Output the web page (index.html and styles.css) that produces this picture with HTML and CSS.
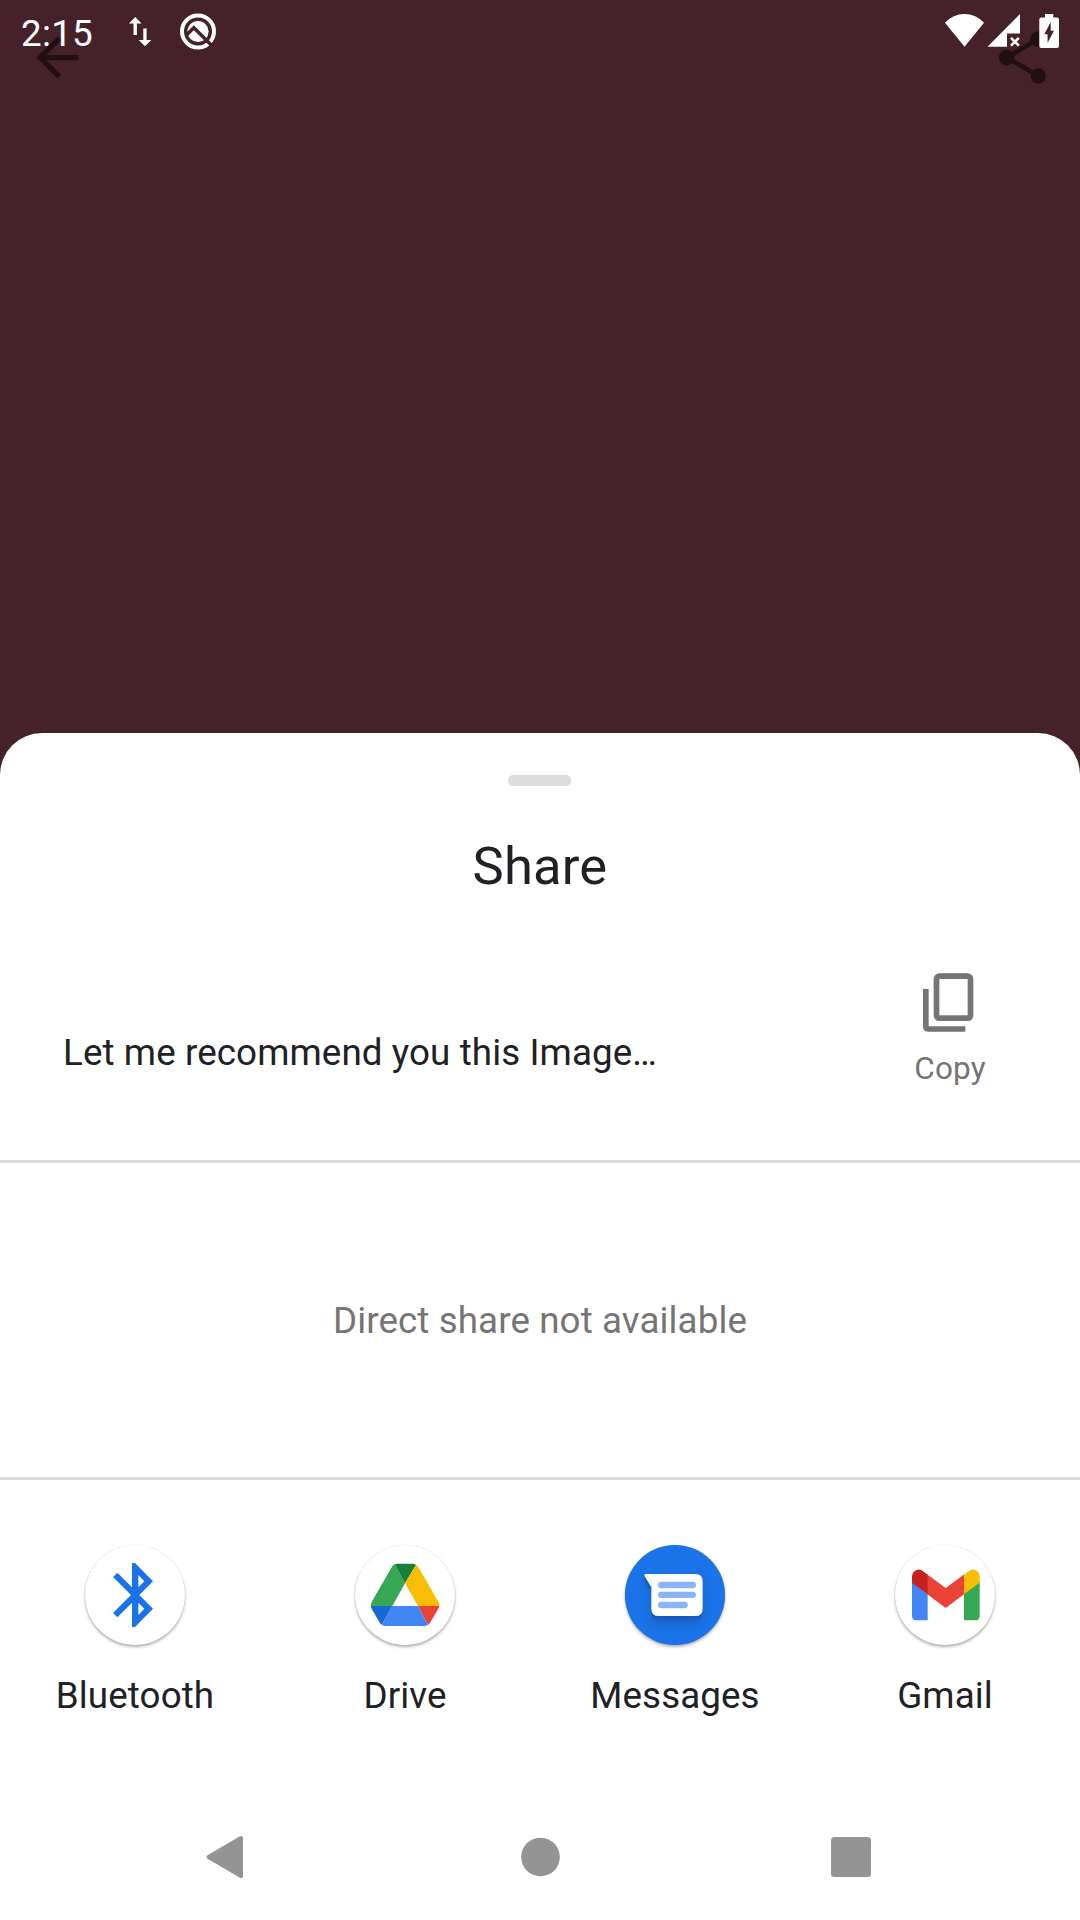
FILE: index.html
```html
<!DOCTYPE html>
<html lang="en">
<head>
<meta charset="utf-8">
<title>Share</title>
<link rel="stylesheet" href="styles.css">
</head>
<body>
<div class="screen">
  <header class="app-bar">
    <svg class="app-icon" viewBox="0 0 24 24"><path d="M20 11H7.830l5.590-5.590L12 4l-8 8 8 8 1.410-1.410L7.830 13H20z"/></svg>
    <svg class="app-icon" viewBox="0 0 24 24"><path d="M18 16.080c-.76 0-1.440.3-1.960.77L8.910 12.700c.05-.23.09-.46.09-.7s-.04-.47-.09-.7l7.050-4.110c.54.5 1.250.81 2.040.81 1.660 0 3-1.340 3-3s-1.340-3-3-3-3 1.340-3 3c0 .24.04.47.09.7L8.040 9.810C7.500 9.310 6.790 9 6 9c-1.660 0-3 1.340-3 3s1.340 3 3 3c.79 0 1.500-.31 2.040-.81l7.120 4.160c-.05.21-.08.43-.08.65 0 1.610 1.310 2.920 2.920 2.920s2.920-1.310 2.920-2.920-1.310-2.920-2.920-2.920z"/></svg>
  </header>

  <div class="status-bar">
    <span class="clock">2:15</span>
    <svg class="status-left" viewBox="126 0 96 64">
      <path d="M135.200 17l6.300 6.500h-4.600V35h-3.400V23.500h-4.600zM145 46.200l-6.300-6.200h4.600V28.500h3.300V40h4.700z"/>
      <circle class="ring" cx="198" cy="31.500" r="16"/>
      <circle cx="198" cy="31.500" r="10.600"/>
      <path class="slash" d="M187 34.500L193.800 27.700L211.500 45.200"/>
    </svg>
    <svg class="status-right" viewBox="940 0 124 64">
      <path d="M945 22.800Q953 14 964.500 14T984 22.800L964.500 46.700zM987.500 46.800L1020 14V33.500H1007V46.800z"/>
      <path class="cross" d="M1011 37.800l7.800 7.800m0-7.800l-7.800 7.800"/>
      <path fill-rule="evenodd" d="M1045 14h8.300v3.500h3.700q2 0 2 2V46q0 2-2 2h-15.700q-2 0-2-2V19.500q0-2 2-2h3.700zM1050.700 22L1044.300 34.300h3.300v8.400L1054 30.700h-3.300z"/>
    </svg>
  </div>

  <main class="sheet">
    <div class="handle"></div>
    <h1 class="title">Share</h1>

    <section class="preview">
      <p class="preview-text">Let me recommend you this Image…</p>
      <div class="copy">
        <svg class="copy-icon" viewBox="129 69 162 177">
          <rect x="169.500" y="78.500" width="102" height="126" rx="8"/>
          <path d="M137.500 117V229q0 8 8 8H256"/>
        </svg>
        <span>Copy</span>
      </div>
    </section>

    <section class="direct">Direct share not available</section>

    <section class="apps">
      <div class="app">
        <svg class="badge" viewBox="135 45 300 300">
          <path fill="#1a73e8" fill-rule="evenodd" d="M276 99H285L339 154L298 195L339 236L285 291H276V218L232 262L219 249L273 195L219 141L232 128L276 172zM295 135V172L313 154zM295 218V255L313 236z"/>
        </svg>
        <span>Bluetooth</span>
      </div>
      <div class="app">
        <svg class="badge" viewBox="45 45 300 300">
          <path fill="#34a853" d="M93 228Q92 222 95 216L154 113Q158 106 164 103L195 160L157 228z"/>
          <path fill="#188038" d="M164 103Q168 101 173 101H218Q224 101 228 105L195 160z"/>
          <path fill="#fbbc04" d="M228 105Q233 107 236 113L295 215Q299 222 298 228H234L195 160z"/>
          <path fill="#ea4335" d="M234 228H298Q297 233 294 238L272 275Q269 281 264 284z"/>
          <path fill="#4285f4" d="M157 228H234L264 284Q259 288 253 288H138Q130 288 125 284z"/>
          <path fill="#1967d2" d="M93 228H157L125 284Q121 281 118 276L97 240Q93 234 93 228z"/>
        </svg>
        <span>Drive</span>
      </div>
      <div class="app">
        <svg class="badge badge-blue" viewBox="135 45 300 300">
          <defs>
            <filter id="soft" x="-30%" y="-30%" width="160%" height="180%"><feGaussianBlur stdDeviation="14"/></filter>
          </defs>
          <path fill="#174ea6" opacity=".5" filter="url(#soft)" d="M195 150H345Q368 150 368 171V250Q368 280 345 280H236Q214 280 214 260V187z"/>
          <path fill="#185abc" d="M193 140V150L214 185V247Q214 268 236 268H346Q368 268 368 247V153z"/>
          <path fill="#fff" d="M197 132H346Q368 132 368 154V236Q368 258 346 258H236Q214 258 214 236V172L194 139Q191 132 197 132z"/>
          <path fill="none" stroke="#8ab4f8" stroke-width="19" stroke-linecap="round" d="M243.500 165H338.500M243.500 194.500H338.500M243.500 225H314"/>
        </svg>
        <span>Messages</span>
      </div>
      <div class="app">
        <svg class="badge" viewBox="45 45 300 300">
          <path fill="#4285f4" d="M96 155L143 188V271H110Q96 271 96 257z"/>
          <path fill="#34a853" d="M252 188L299 155V257Q299 271 285 271H252z"/>
          <path fill="#ea4335" d="M141 133L197 174L253 133V192L197 234L141 192z"/>
          <path fill="#c5221f" d="M96 159V139Q97 123 112 119Q122 117 132 126L143 134V192z"/>
          <path fill="#fbbc04" d="M252 134L263 126Q273 117 284 119Q298 123 299 139V158L252 192z"/>
        </svg>
        <span>Gmail</span>
      </div>
    </section>

    <nav class="nav">
      <svg class="nav-icon" viewBox="0 0 44 44"><path d="M3.500 20.300Q1.600 22 3.500 23.700L35.500 42.500Q39 44 39 41V3Q39 0 35.500 1.500z"/></svg>
      <svg class="nav-icon" viewBox="0 0 44 44"><circle cx="23.500" cy="22" r="19.300"/></svg>
      <svg class="nav-icon" viewBox="0 0 44 44"><rect x="2" y="2" width="40" height="40" rx="3.500"/></svg>
    </nav>
  </main>
</div>
</body>
</html>
```
FILE: styles.css
```css
* {
  box-sizing: border-box;
}

body {
  margin: 0;
  background: #452229;
  color: #202124;
  font-family: Roboto, sans-serif;
  font-size: 36.75px;
  letter-spacing: .1px;
  line-height: 44px;
}

svg {
  display: block;
  flex: none;
}

.screen {
  position: relative;
  display: flex;
  flex-direction: column;
  width: 1080px;
  height: 1920px;
  overflow: hidden;
}

.app-bar {
  display: flex;
  justify-content: space-between;
  align-items: flex-start;
  height: 733px;
  padding: 26px;
}

.app-icon {
  width: 63px;
  height: 63px;
  fill: #220f13;
}

/* The system bar is drawn over the app's own bar. */
.status-bar {
  position: absolute;
  top: 0;
  left: 0;
  display: flex;
  width: 1080px;
  height: 64px;
  padding: 0 16px 0 21px;
  color: #fff;
  fill: #fff;
}

.clock {
  width: 105px;
  padding-top: 12px;
  letter-spacing: .3px;
}

.status-left {
  width: 96px;
  height: 64px;
}

.status-right {
  width: 124px;
  height: 64px;
  margin-left: auto;
}

.ring,
.slash {
  fill: none;
  stroke: #fff;
  stroke-width: 4;
}

.slash {
  stroke: #452229;
  stroke-width: 3.4;
}

.cross {
  fill: none;
  stroke: #fff;
  stroke-width: 2.6;
}

.sheet {
  display: flex;
  flex: 1;
  flex-direction: column;
  align-items: stretch;
  padding-top: 42px;
  border-radius: 42px 42px 0 0;
  background: #fff;
}

.handle {
  align-self: center;
  width: 63px;
  height: 11px;
  margin-right: 1px;
  border-radius: 5px;
  background: #dcdcdc;
}

.title {
  margin: 49px 0 0;
  font-size: 52.5px;
  font-weight: 400;
  letter-spacing: .2px;
  line-height: 62px;
  text-align: center;
}

.preview {
  display: flex;
  justify-content: space-between;
  height: 266px;
  padding: 76px 63px 0;
  border-bottom: 3px solid #dadce0;
}

.preview-text {
  margin: 58px 0 0;
}

.copy {
  display: flex;
  flex-direction: column;
  align-items: center;
  gap: 19px;
  width: 134px;
  color: #757575;
  font-size: 31.5px;
  line-height: 36px;
}

.copy-icon {
  width: 54px;
  height: 59px;
  fill: none;
  stroke: #757575;
  stroke-width: 17;
}

.direct {
  height: 317px;
  padding-top: 136px;
  border-bottom: 3px solid #dadce0;
  color: #757575;
  text-align: center;
}

.apps {
  display: grid;
  grid-template-columns: repeat(4, 1fr);
  height: 325px;
  padding-top: 65px;
}

.app {
  display: flex;
  flex-direction: column;
  align-items: center;
  gap: 29px;
}

.badge {
  width: 100px;
  height: 100px;
  border-radius: 50%;
  box-shadow: 0 2px 3px rgba(0, 0, 0, .3), 0 0 1px rgba(0, 0, 0, .2);
}

.badge-blue {
  background: #1a73e8;
}

.nav {
  display: flex;
  justify-content: space-between;
  padding: 30px 207px 0 204px;
}

.nav-icon {
  width: 44px;
  height: 44px;
  fill: #949494;
}
```
